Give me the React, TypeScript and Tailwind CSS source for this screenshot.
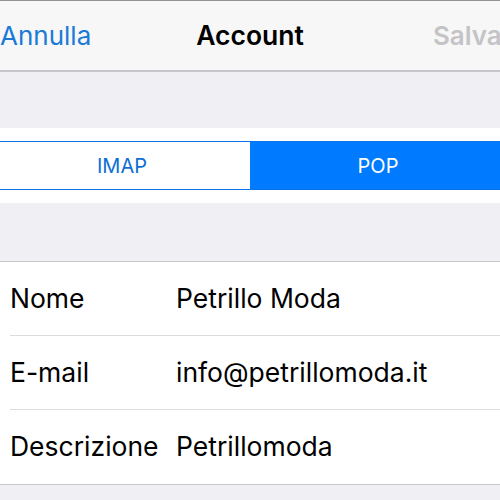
import React from 'react';

const rows = [
  { label: 'Nome', value: 'Petrillo Moda' },
  { label: 'E-mail', value: 'info@petrillomoda.it' },
  { label: 'Descrizione', value: 'Petrillomoda' },
];

const App: React.FC = () => {
  return (
    <div
      className="w-[500px] h-[500px] overflow-hidden bg-[#efeff4]"
      style={{ fontFamily: 'Inter, "Liberation Sans", sans-serif' }}
    >
      <div className="h-[1px] bg-[#939397]" />
      {/* nav bar */}
      <div className="h-[69px] bg-[#f7f7f8] flex items-center overflow-hidden whitespace-nowrap text-[26px]">
        <span className="shrink-0 text-[#1a7ad6]">Annulla</span>
        <span className="shrink-0 ml-[105px] text-[26.5px] font-semibold text-black">Account</span>
        <span className="shrink-0 ml-[129px] font-semibold text-[#c4c4c7]">Salva</span>
      </div>
      <div className="h-[2px] bg-[#c6c6ca]" />

      <div className="h-[56px]" />

      {/* segmented control */}
      <div className="bg-white py-[13px] overflow-hidden">
        <div className="ml-[-7px] w-[514px] h-[49px] flex border border-[#0a74e6] text-[20px]">
          <div className="flex-1 flex items-center justify-center text-[#0c6fd4] bg-white">IMAP</div>
          <div className="flex-1 flex items-center justify-center text-white bg-[#007aff]">POP</div>
        </div>
      </div>

      <div className="h-[58px]" />

      {/* form rows */}
      <div className="bg-white border-t border-b border-[#c8c7cc]">
        {rows.map((row, i) => (
          <div key={row.label} className="pl-[10px]">
            <div
              className={
                'h-[74px] flex items-center text-[26.5px] text-black ' +
                (i < rows.length - 1 ? 'border-b border-[#dcdcdf]' : '')
              }
            >
              <span className="w-[166px] shrink-0">{row.label}</span>
              <span>{row.value}</span>
            </div>
          </div>
        ))}
      </div>
    </div>
  );
};

export default App;
